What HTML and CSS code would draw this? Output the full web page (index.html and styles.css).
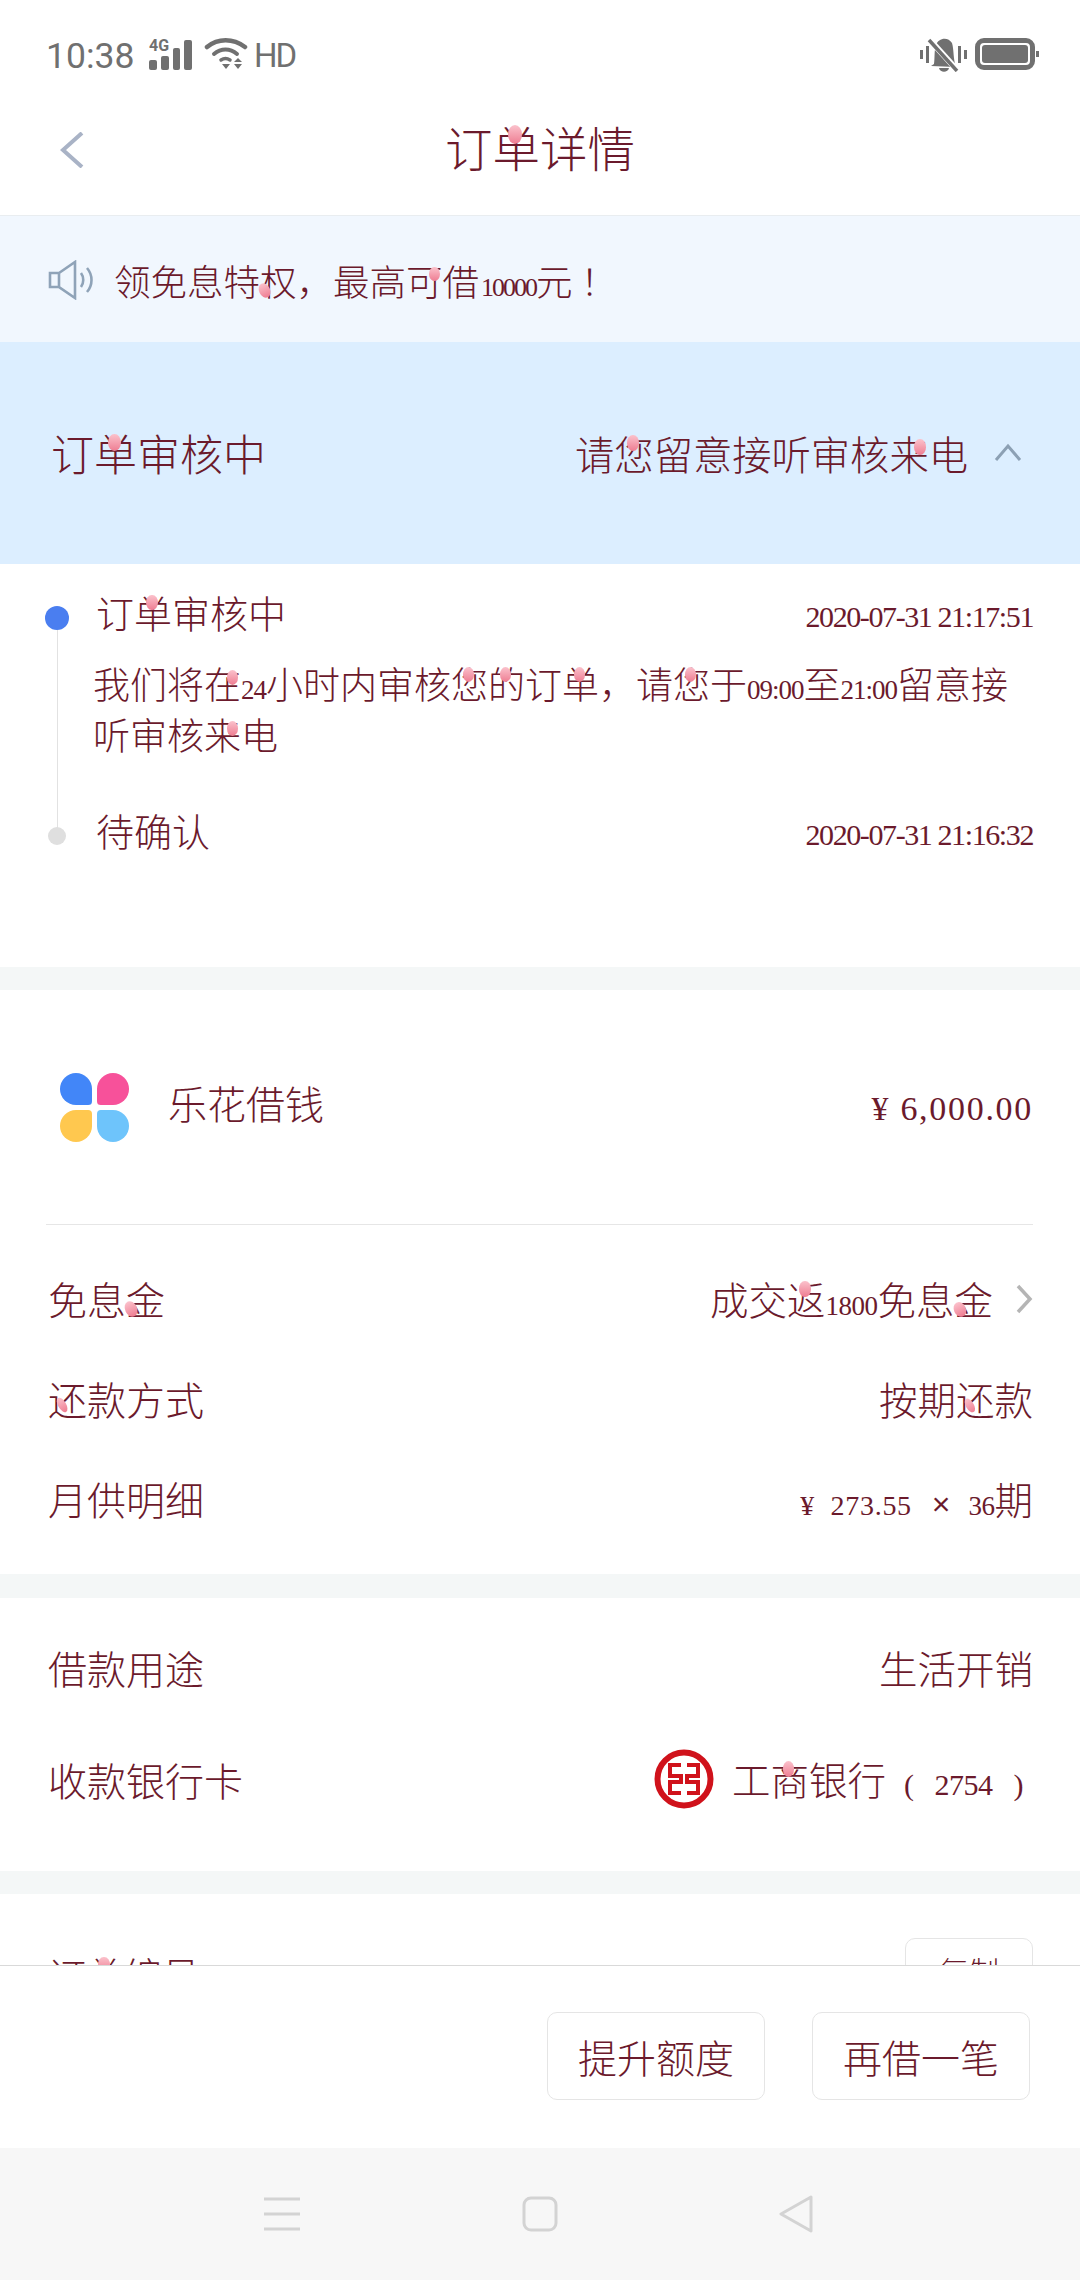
FILE: index.html
```html
<!DOCTYPE html>
<html lang="zh-CN">
<head>
<meta charset="utf-8">
<title>订单详情</title>
<link rel="stylesheet" href="styles.css">
</head>
<body>
<div class="phone">
  <div class="status">
    <span class="time">10:38</span>
    <span class="net">
      <span class="net-label">4G</span>
      <span class="bars"><i class="b1"></i><i class="b2"></i><i class="b3"></i><i class="b4"></i></span>
    </span>
    <svg class="wifi" viewBox="0 0 44 32"><g fill="none" stroke="#707070" stroke-width="4.5" stroke-linecap="round"><path d="M3 9C14 0 29 0 41 9"/><path d="M10 16C17 10 26 10 33 16" stroke-width="4"/><path d="M17 22C20 20 23 20 26 22" stroke-width="3.5"/></g><path d="M18 26h8l-4 5zM30 24l4-4 4 4zM30 26h8l-4 5z" fill="#707070"/></svg>
    <span class="hd">HD</span>
    <span class="spacer"></span>
    <svg class="bell" viewBox="0 0 47 35"><g fill="#707070"><rect x="0" y="13" width="3" height="9"/><rect x="6" y="9" width="3" height="17"/><rect x="38" y="9" width="3" height="17"/><rect x="44" y="13" width="3" height="9"/><path d="M14 27C15 20 14 14 16 8 18 1 28-1 32 6 34 12 33 22 36 30L11 29zM19 31h10c-1 5-9 5-10 0z"/></g><path d="M9 2L38 34" stroke="#fff" stroke-width="6"/><path d="M9 3L37 34" stroke="#707070" stroke-width="3.5"/></svg>
    <span class="battery"><span class="battery-fill"></span></span>
  </div>

  <header class="header">
    <svg class="back" viewBox="0 0 24 36"><path d="M22 1L3 18l19 17" fill="none" stroke="#a9b3c6" stroke-width="4"/></svg>
    <h1 class="title">订<span class="pt top">单</span>详情</h1>
  </header>

  <main class="scroll">
    <div class="notice">
      <svg class="speaker" viewBox="0 0 48 40"><g fill="none" stroke="#8fa3b8" stroke-width="2.6"><path d="M2 13h9v14H2zM11 13L27 2v36L11 27z"/><path d="M33 13c3 4 3 10 0 14"/><path d="M39 8c6 7 6 17 0 24"/></g></svg>
      <span class="notice-text">领免息特<span class="pt left">权</span>，最高<span class="pt right">可</span>借<span class="num n-notice">10000</span>元<span class="bang">！</span></span>
    </div>

    <div class="state">
      <span class="state-name">订<span class="pt top">单</span>审核中</span>
      <span class="state-hint">请<span class="pt top">您</span>留意接听审核<span class="pt right">来</span>电</span>
      <svg class="up" viewBox="0 0 28 18"><path d="M2 17L14 3l12 14" fill="none" stroke="#8ca0b4" stroke-width="3"/></svg>
    </div>

    <section class="timeline">
      <div class="tl-item first">
        <div class="rail"><i class="dot on"></i><i class="line"></i></div>
        <div class="tl-body">
          <div class="tl-head"><span>订<span class="pt top">单</span>审核中</span><span class="date">2020-07-31 21:17:51</span></div>
          <p class="tl-text">我们将<span class="pt right">在</span><span class="num">24</span>小时内审核<span class="pt top">您</span><span class="pt top">的</span>订<span class="pt top">单</span>，请<span class="pt top">您</span>于<span class="num">09:00</span>至<span class="num">21:00</span>留意接<br>听审核<span class="pt right">来</span>电</p>
        </div>
      </div>
      <div class="tl-item">
        <div class="rail"><i class="line stub"></i><i class="dot"></i></div>
        <div class="tl-body">
          <div class="tl-head"><span>待确认</span><span class="date">2020-07-31 21:16:32</span></div>
        </div>
      </div>
    </section>

    <section class="card loan">
      <div class="product">
        <div class="logo"><i class="p-blue"></i><i class="p-pink"></i><i class="p-yellow"></i><i class="p-sky"></i></div>
        <span class="product-name">乐花借钱</span>
        <span class="amount">¥ 6,000.00</span>
      </div>
      <div class="row"><span>免息<span class="pt left">金</span></span><span class="val">成交<span class="pt top">返</span><span class="num">1800</span>免息<span class="pt left">金</span><svg class="more" viewBox="0 0 18 30"><path d="M3 2l12 13L3 28" fill="none" stroke="#b5b5b5" stroke-width="3.5"/></svg></span></div>
      <div class="row"><span><span class="pt mid">还</span>款方式</span><span class="val">按期<span class="pt mid">还</span>款</span></div>
      <div class="row"><span>月供明细</span><span class="val"><span class="num money">¥ 273.55</span><span class="times">×</span><span class="num">36</span>期</span></div>
    </section>

    <section class="card usage">
      <div class="row tall"><span>借款用途</span><span class="val">生活开销</span></div>
      <div class="row tall"><span>收款银行卡</span><span class="val bank"><svg class="icbc" viewBox="0 0 60 60"><circle cx="30" cy="30" r="26.5" fill="none" stroke="#d0121b" stroke-width="6"/><path d="M27 16H16V27H27V33H16V44H27M33 16H44V27H33V33H44V44H33" fill="none" stroke="#d0121b" stroke-width="4"/></svg>工<span class="pt top">商</span>银行<span class="num bank-no">( 2754 )</span></span></div>
    </section>

    <section class="card order">
      <div class="row order-row"><span class="order-label">订<span class="pt top">单</span>编号</span><span class="copy">复制</span></div>
    </section>
  </main>

  <div class="actions">
    <button class="btn">提升额度</button>
    <button class="btn">再借一笔</button>
  </div>

  <nav class="nav">
    <svg class="nav-menu" viewBox="0 0 36 34"><path d="M0 2h36M0 17h36M0 32h36" stroke="#d3d3d3" stroke-width="3"/></svg>
    <svg class="nav-home" viewBox="0 0 36 36"><rect x="2" y="2" width="32" height="32" rx="7" fill="none" stroke="#d3d3d3" stroke-width="3"/></svg>
    <svg class="nav-back" viewBox="0 0 36 38"><path d="M33 2L3 19l30 17z" fill="none" stroke="#d3d3d3" stroke-width="3" stroke-linejoin="round"/></svg>
  </nav>
</div>
</body>
</html>
```
FILE: styles.css
```css
* { box-sizing: border-box; }
html, body { margin: 0; padding: 0; background: #fff; }
.phone {
  width: 1080px; height: 2280px; display: flex; flex-direction: column; overflow: hidden;
  font-family: "Liberation Serif", "Noto Sans CJK SC", serif; font-weight: 300;
  font-size: 39px; color: #6b1a2c; background: #fff;
}
i { display: block; }

/* status bar */
.status { height: 100px; flex: none; display: flex; align-items: flex-start; padding: 38px 45px 0 46px; color: #707070; font-family: Roboto, sans-serif; font-weight: 400; }
.time { font-size: 35.5px; line-height: 36px; width: 103px; }
.net { position: relative; width: 43px; height: 31px; margin-top: 1px; }
.net-label { position: absolute; left: 0; top: 0; font-size: 16px; line-height: 14px; font-weight: 700; }
.bars { display: flex; gap: 4px; height: 31px; align-items: flex-end; }
.bars i { width: 8px; background: #707070; border-radius: 2px; }
.bars .b1 { height: 10px; } .bars .b2 { height: 14px; } .bars .b3 { height: 22px; } .bars .b4 { height: 30px; }
.wifi { width: 44px; height: 32px; margin-left: 12px; flex: none; }
.hd { font-size: 33px; line-height: 36px; margin-left: 6px; letter-spacing: -2px; }
.spacer { flex: 1; }
.bell { width: 47px; height: 35px; flex: none; margin-top: -1px; }
.battery { width: 60px; height: 32px; margin-left: 8px; border: 5px solid #707070; border-radius: 9px; padding: 2px; position: relative; }
.battery::after { content: ""; position: absolute; right: -9px; top: 8px; width: 3px; height: 6px; background: #707070; }
.battery-fill { display: block; width: 100%; height: 100%; background: #707070; border-radius: 3px; }

/* header */
.header { height: 116px; flex: none; display: flex; align-items: center; justify-content: center; position: relative; border-bottom: 1px solid #e9edf0; padding-bottom: 14px; }
.back { position: absolute; left: 60px; top: 32px; width: 24px; height: 36px; }
.title { margin: 0; font-size: 47.5px; font-weight: 300; line-height: 60px; }

/* petals decorating glyphs */
.pt { position: relative; }
.pt::after { content: ""; position: absolute; width: .3em; height: .4em; border-radius: 50%; background: linear-gradient(#fbc2cc, #ee7d92); }
.pt.top::after { left: .32em; top: .02em; }
.pt.right::after { left: .62em; top: .12em; }
.pt.left::after { left: -.02em; top: .55em; transform: rotate(-25deg); }
.pt.mid::after { left: .25em; top: .45em; width: .2em; transform: rotate(-30deg); }

/* scroll region */
.scroll { flex: 1; min-height: 0; overflow: hidden; background: #f4f7f7; }
.notice { height: 126px; background: #f1f7fe; display: flex; align-items: center; padding: 2px 0 0 48px; font-size: 36.5px; }
.speaker { width: 48px; height: 40px; flex: none; margin-right: 18px; }
.num { font-family: "Liberation Serif", serif; font-size: 27px; font-weight: 400; line-height: 1; letter-spacing: -1px; }
.n-notice { font-size: 26px; letter-spacing: -2px; margin-left: 2px; }
.bang { margin-left: 8px; }
.state { height: 222px; background: #dceeff; display: flex; align-items: center; padding: 0 58px 2px 51px; }
.state-name { font-size: 43px; flex: 1; }
.state-hint { font-size: 39.3px; }
.up { width: 28px; height: 18px; margin-left: 26px; flex: none; }

/* timeline */
.timeline { height: 403px; background: #fff; padding-left: 45px; margin-bottom: 23px; }
.tl-item { display: flex; }
.tl-item.first { height: 241px; padding-top: 23px; }
.rail { width: 24px; flex: none; display: flex; flex-direction: column; align-items: center; }
.first .rail { padding-top: 19px; margin-bottom: -23px; }
.dot { width: 18px; height: 18px; border-radius: 50%; background: #dfdfdf; flex: none; }
.dot.on { width: 24px; height: 24px; background: #4a7ef0; }
.line { width: 1px; flex: 1; background: #e2e2e2; }
.line.stub { flex: none; height: 22px; }
.tl-body { flex: 1; padding: 0 47px 0 27px; }
.tl-head { display: flex; justify-content: space-between; align-items: center; font-size: 38px; line-height: 52px; }
.date { font-size: 30px; letter-spacing: -1.4px; font-weight: 400; line-height: 52px; padding-top: 4px; }
.tl-text { margin: 18px 0 0 -3px; font-size: 37px; line-height: 51px; white-space: nowrap; }

/* cards */
.card { background: #fff; margin-bottom: 24px; padding: 0 47px 0 48px; }
.loan { height: 584px; padding-bottom: 24px; }
.product { height: 235px; display: flex; align-items: center; border-bottom: 1px solid #e6e6e6; margin-left: -2px; padding-left: 14px; margin-bottom: 25px; }
.logo { width: 69px; display: grid; grid-template-columns: 32px 32px; gap: 5px; flex: none; margin-right: 39px; margin-top: 1px; }
.logo i { width: 32px; height: 32px; }
.p-blue { background: #4286f8; border-radius: 50% 50% 12% 50%; }
.p-pink { background: #f7519a; border-radius: 50% 50% 50% 12%; }
.p-yellow { background: #ffc84f; border-radius: 50% 12% 50% 50%; }
.p-sky { background: #6ec4fb; border-radius: 12% 50% 50% 50%; }
.product-name { flex: 1; font-size: 39px; line-height: 52px; padding-bottom: 3px; }
.amount { font-size: 34px; letter-spacing: 1.7px; font-weight: 400; padding-top: 3px; }
.row { height: 100px; display: flex; align-items: center; justify-content: space-between; font-size: 39px; padding-bottom: 5px; }
.val { font-size: 38.5px; white-space: nowrap; }
.val .num { font-size: 27px; letter-spacing: -.5px; }
.val .money { font-size: 28px; letter-spacing: .7px; word-spacing: 8px; }
.more { width: 18px; height: 30px; margin-left: 22px; vertical-align: 1px; }
.times { font-size: 32px; font-family: "Liberation Sans", sans-serif; margin: 0 18px 0 20px; font-weight: 400; }
.usage { height: 273px; padding-top: 15px; margin-bottom: 23px; }
.row.tall { height: 112px; }
.icbc { width: 60px; height: 60px; margin-right: 18px; vertical-align: -14px; }
.bank { padding-right: 10px; }
.val .bank-no { font-size: 30px; margin-left: 18px; word-spacing: 14px; }
.order { height: 200px; }
.order-row { height: auto; padding: 44px 0 0; align-items: flex-start; position: relative; }
.order-label { line-height: 52px; margin-top: 13px; font-size: 38px; }
.copy { position: absolute; right: 0; top: 44px; width: 128px; height: 64px; border: 1px solid #e5e5e5; border-radius: 10px; font-size: 30px; display: flex; align-items: center; justify-content: center; }

/* actions */
.actions { height: 183px; flex: none; background: #fff; border-top: 1px solid #d9d9d9; display: flex; justify-content: flex-end; gap: 47px; padding: 46px 50px 0 0; }
.btn { width: 218px; height: 88px; background: #fff; border: 1px solid #e5e5e5; border-radius: 10px; font: inherit; font-size: 39px; color: inherit; padding: 0; }

/* navigation bar */
.nav { height: 132px; flex: none; background: #f7f7f7; display: flex; align-items: center; padding-left: 264px; }
.nav-menu { width: 36px; height: 34px; }
.nav-home { width: 36px; height: 36px; margin-left: 222px; }
.nav-back { width: 36px; height: 38px; margin-left: 220px; }
```
